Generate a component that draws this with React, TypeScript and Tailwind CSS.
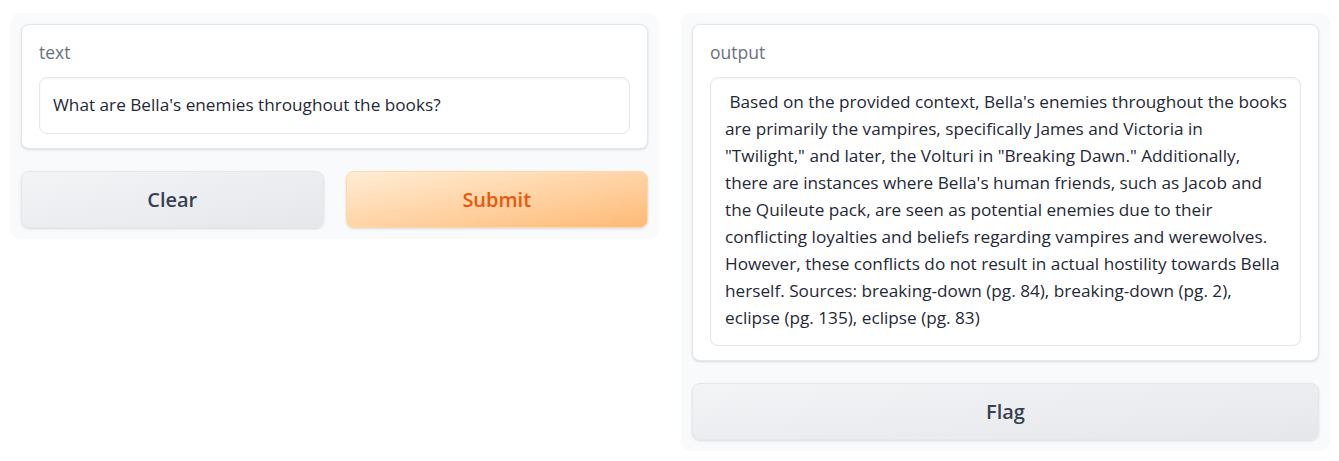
import React from "react";

const lines = [
  " Based on the provided context, Bella's enemies throughout the books",
  "are primarily the vampires, specifically James and Victoria in",
  "\"Twilight,\" and later, the Volturi in \"Breaking Dawn.\" Additionally,",
  "there are instances where Bella's human friends, such as Jacob and",
  "the Quileute pack, are seen as potential enemies due to their",
  "conflicting loyalties and beliefs regarding vampires and werewolves.",
  "However, these conflicts do not result in actual hostility towards Bella",
  "herself. Sources: breaking-down (pg. 84), breaking-down (pg. 2),",
  "eclipse (pg. 135), eclipse (pg. 83)",
];

export default function App() {
  return (
    <div
      className="w-[1339px] h-[461px] bg-white flex gap-[22px] pl-[10px] pt-[13px] text-[#1f2937]"
      style={{ fontFamily: "'Open Sans', 'Noto Sans', sans-serif" }}
    >
      <div className="w-[649px] shrink-0 self-start bg-[#f9fafb] rounded-[10px] p-[11px] flex flex-col gap-[22px]">
        <div className="bg-white border border-[#e5e7eb] rounded-[8px] px-[17px] pt-[15px] pb-[14px] shadow-sm">
          <div className="text-[17.5px] leading-[24px] text-[#6b7280] mb-[13px]">text</div>
          <div className="border border-[#e5e7eb] rounded-[8px] h-[57px] px-[13px] pb-[2px] flex items-center text-[17.2px] shadow-[inset_0_1px_2px_rgba(0,0,0,0.05)]">
            What are Bella's enemies throughout the books?
          </div>
        </div>
        <div className="flex gap-[22px]">
          <button className="flex-1 h-[57px] rounded-[8px] border border-[#e5e7eb] bg-gradient-to-br from-[#f3f4f6] to-[#e5e7eb] text-[#374151] text-[20px] font-semibold shadow-sm">
            Clear
          </button>
          <button className="flex-1 h-[57px] rounded-[8px] border border-[#fed7aa] bg-gradient-to-br from-[#ffedd5] to-[#fdba74] text-[#ea580c] text-[20px] font-semibold shadow-sm">
            Submit
          </button>
        </div>
      </div>
      <div className="w-[649px] shrink-0 self-start bg-[#f9fafb] rounded-[10px] p-[11px] flex flex-col gap-[22px]">
        <div className="bg-white border border-[#e5e7eb] rounded-[8px] px-[17px] pt-[15px] pb-[14px] shadow-sm">
          <div className="text-[17.5px] leading-[24px] text-[#6b7280] mb-[13px]">output</div>
          <div className="border border-[#e5e7eb] rounded-[8px] px-[14px] pt-[10px] pb-[14px] text-[17.2px] leading-[27px] shadow-[inset_0_1px_2px_rgba(0,0,0,0.05)] whitespace-pre">
            {lines.map((l, i) => (
              <div key={i}>{l}</div>
            ))}
          </div>
        </div>
        <button className="w-full h-[57px] rounded-[8px] border border-[#e5e7eb] bg-gradient-to-br from-[#f3f4f6] to-[#e5e7eb] text-[#374151] text-[20px] font-semibold shadow-sm">
          Flag
        </button>
      </div>
    </div>
  );
}
